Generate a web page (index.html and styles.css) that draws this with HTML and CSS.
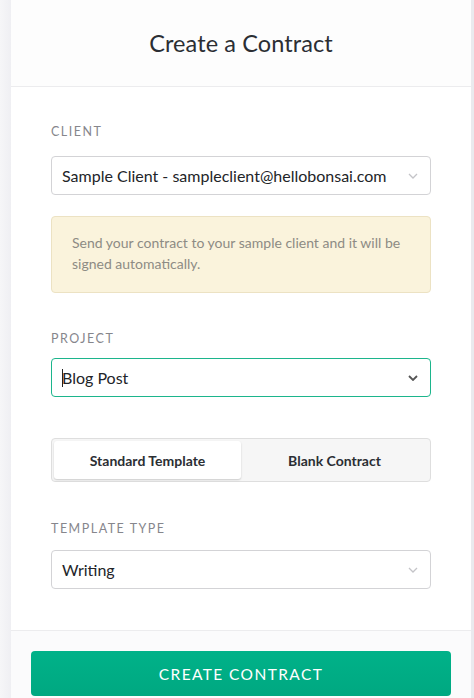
FILE: index.html
```html
<!DOCTYPE html>
<html>
<head>
<meta charset="utf-8">
<link rel="stylesheet" href="styles.css">
</head>
<body>
<div class="page">
  <div class="side-left"></div>
  <div class="modal">
    <div class="header"><h1 class="title">Create a Contract</h1></div>
    <div class="body">
      <div class="field">
        <div class="label">CLIENT</div>
        <div class="select">
          <span class="value">Sample Client - sampleclient@hellobonsai.com</span>
          <svg class="chev light" width="10" height="6" viewBox="0 0 10 6"><path d="M1 1l4 4 4-4" fill="none" stroke="currentColor" stroke-width="1.3"/></svg>
        </div>
        <div class="notice">Send your contract to your sample client and it will be signed automatically.</div>
      </div>
      <div class="field project">
        <div class="label">PROJECT</div>
        <div class="select focus">
          <span class="caret"></span><span class="value">Blog Post</span>
          <svg class="chev dark" width="10" height="6" viewBox="0 0 10 6"><path d="M1 1l4 4 4-4" fill="none" stroke="currentColor" stroke-width="1.8"/></svg>
        </div>
      </div>
      <div class="toggle">
        <div class="opt active">Standard Template</div>
        <div class="opt">Blank Contract</div>
      </div>
      <div class="field ttype">
        <div class="label">TEMPLATE TYPE</div>
        <div class="select">
          <span class="value">Writing</span>
          <svg class="chev light" width="10" height="6" viewBox="0 0 10 6"><path d="M1 1l4 4 4-4" fill="none" stroke="currentColor" stroke-width="1.3"/></svg>
        </div>
      </div>
    </div>
    <div class="footer">
      <button class="cta">CREATE CONTRACT</button>
    </div>
  </div>
  <div class="side-right"></div>
</div>
</body>
</html>
```
FILE: styles.css
```css
* { box-sizing: border-box; }
html, body { margin: 0; padding: 0; }
body {
  width: 474px; height: 698px; overflow: hidden;
  font-family: Lato, "Open Sans", sans-serif;
  background: #f3f3f6;
}
.page { display: flex; height: 698px; }
.side-left { width: 11px; background: linear-gradient(to right, #f6f6f8, #efeff3); }
.side-right { width: 3px; background: #eaeaee; }
.modal { width: 460px; background: #fff; display: flex; flex-direction: column; }
.header {
  height: 87px; background: #fdfdfd; border-bottom: 1px solid #ececee;
  display: flex; justify-content: center; padding-top: 28px;
}
.title { margin: 0; font-weight: 400; font-size: 23.5px; line-height: 30px; color: #2b2e33; letter-spacing: 0.1px; }
.body { padding: 37px 40px 0 40px; height: 544px; border-bottom: 1px solid #ececee; }
.label { font-size: 12.5px; letter-spacing: 1.5px; color: #86868c; line-height: 16px; margin-bottom: 16px; }
.select {
  height: 39px; border: 1px solid #d3d3d6; border-radius: 4px;
  display: flex; align-items: center; padding: 0 12px 0 10px; position: relative;
}
.select .value { flex: 1; font-size: 16px; color: #222428; }
.select.focus { border-color: #1cb58c; }
.caret { display: inline-block; width: 1px; height: 18px; background: #222; margin-right: -1px; }
.chev { flex: none; }
.chev.light { color: #c4c4c8; }
.chev.dark { color: #555; }
.notice {
  margin-top: 21px; height: 77px; background: #faf3dc; border: 1px solid #ece2c3; border-radius: 4px;
  padding: 15px 20px 0 20px; font-size: 14px; line-height: 21px; color: #8d8b84;
}
.project { margin-top: 38px; }
.project .label { margin-bottom: 11px; }
.toggle {
  margin-top: 41px; height: 44px; background: #f6f6f6; border: 1px solid #dedede; border-radius: 4px;
  display: flex; padding: 2px;
}
.opt {
  flex: 1; display: flex; align-items: center; justify-content: center;
  font-size: 14px; font-weight: 700; color: #2b2e33;
}
.opt.active { background: #fff; border-radius: 3px; box-shadow: 0 1px 2px rgba(0,0,0,0.18); flex: 0 0 187px; }
.ttype { margin-top: 39px; }
.ttype .label { margin-bottom: 13px; }
.footer { flex: 1; background: #fbfbfc; padding: 20px 20px 0 20px; }
.cta {
  width: 420px; height: 45px; border: none; border-radius: 4px;
  background: linear-gradient(#00b289, #00a881); color: #fff;
  font-family: Lato, "Open Sans", sans-serif; font-size: 15.5px; letter-spacing: 1.4px; font-weight: 400;
}
```
